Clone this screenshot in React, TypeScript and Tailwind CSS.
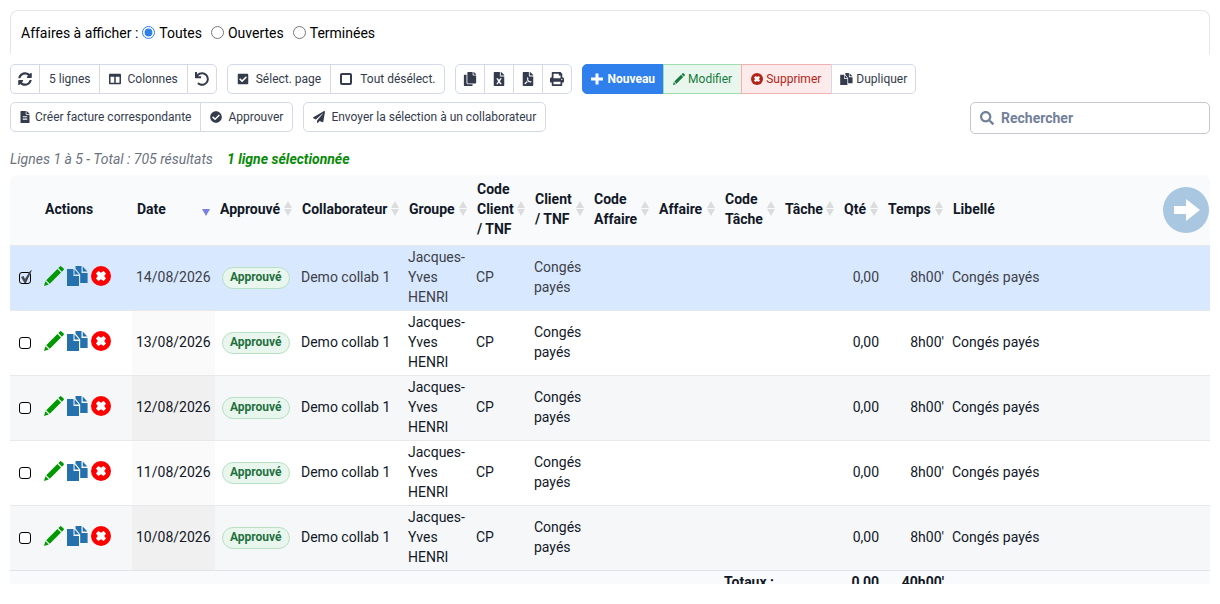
import React from 'react';
import { FaCopy, FaSyncAlt, FaUndo, FaFileExcel, FaFilePdf, FaPrint, FaFileAlt, FaCheckCircle, FaPaperPlane, FaSearch, FaColumns, FaCheckSquare } from 'react-icons/fa';

type IconProps = { className?: string };

const Pencil = ({ className }: IconProps) => (
  <svg viewBox="0 0 20 20" className={className} fill="currentColor" aria-hidden="true">
    <path d="M0 20L1.4 15.2L4.8 18.6Z M2.2 14.2L13.4 3L17 6.6L5.8 17.8Z M14.3 2.1L16 .4Q16.7-.2 17.4.4L19.6 2.6Q20.2 3.3 19.6 4L17.9 5.7Z" />
  </svg>
);

const Duplicate = ({ className }: IconProps) => (
  <svg viewBox="0 0 21 20" className={className} fill="currentColor" aria-hidden="true">
    <path d="M0 3H6.5V10H12V20H0Z M7.5 3.2L12 8.6H7.5Z M8.5 0H14.5V7H20.6V17H13.2V8.6L8.5 2.6Z M15.7 .4L20.4 5.6H15.7Z" />
  </svg>
);

const Remove = ({ className }: IconProps) => (
  <svg viewBox="0 0 20 20" className={className} aria-hidden="true">
    <circle cx="10" cy="10" r="10" fill="currentColor" />
    <path d="M7.4 5L10 6.8L12.6 5L15 7.4L13.2 10L15 12.6L12.6 15L10 13.2L7.4 15L5 12.6L6.8 10L5 7.4Z" fill="#fff" />
  </svg>
);

const Plus = ({ className }: IconProps) => (
  <svg viewBox="0 0 12 12" className={className} fill="currentColor" aria-hidden="true">
    <path d="M4.5 .5H7.5V4.5H12V7.5H7.5V11.5H4.5V7.5H0V4.5H4.5Z" />
  </svg>
);

const Square = ({ className }: IconProps) => (
  <svg viewBox="0 0 12 12" className={className} fill="none" stroke="currentColor" strokeWidth="2" aria-hidden="true">
    <rect x="1" y="1" width="10" height="10" rx="1" />
  </svg>
);

const ArrowRight = ({ className }: IconProps) => (
  <svg viewBox="0 0 46 46" className={className} aria-hidden="true">
    <circle cx="23" cy="23" r="23" fill="#a9c7e0" />
    <path d="M11 19H23V12L37 23L23 34V27H11Z" fill="#fff" />
  </svg>
);

const Sort = () => (
  <svg viewBox="0 0 8 15" className="h-[15px] w-2 shrink-0" fill="#dcdcdc" aria-hidden="true">
    <path d="M4 0L8 7H0Z M0 8H8L4 15Z" />
  </svg>
);

const base = 'flex h-[30px] items-center border text-xs whitespace-nowrap -ml-px first:ml-0 first:rounded-l-[5px] last:rounded-r-[5px]';
const plain = 'border-[#d3d9e8] bg-white text-[#343b4c]';

function Btn({ children, tone = plain, className = 'gap-2 px-[9px]', label }: { children: React.ReactNode; tone?: string; className?: string; label?: string }) {
  return (
    <button type="button" aria-label={label} className={`${base} ${tone} ${className}`}>
      {children}
    </button>
  );
}

const Group = ({ children }: { children: React.ReactNode }) => <div className="flex">{children}</div>;

const columns = [
  { label: 'Approuvé', width: 'w-[82px]' },
  { label: 'Collaborateur', width: 'w-[107px]' },
  { label: 'Groupe', width: 'w-[68px]' },
  { label: 'Code Client / TNF', width: 'w-[58px]' },
  { label: 'Client / TNF', width: 'w-[59px]' },
  { label: 'Code Affaire', width: 'w-[65px]' },
  { label: 'Affaire', width: 'w-[66px]' },
  { label: 'Code Tâche', width: 'w-[60px]' },
  { label: 'Tâche', width: 'w-[59px]' },
  { label: 'Qté', width: 'w-[44px]' },
  { label: 'Temps', width: 'w-[65px]' },
];

const rows = ['14/08/2026', '13/08/2026', '12/08/2026', '11/08/2026', '10/08/2026'];

function Row({ date, index }: { date: string; index: number }) {
  const [checked, setChecked] = React.useState(index === 0);
  const odd = index % 2 === 1;
  const bg = checked ? 'bg-[#d8e8fe] text-[#3c4049]' : odd ? 'bg-white text-[#111827]' : 'bg-[#f6f7f9] text-[#111827]';
  const dateBg = checked ? '' : odd ? 'bg-[#fafafa]' : 'bg-[#f0f0f0]';
  return (
    <tr className={`border-t border-[#e7e8ea] *:pt-px *:pb-[3px] ${bg}`}>
      <td>
        <label className="relative ml-[9px] mt-0.5 block size-3">
          <input
            type="checkbox"
            aria-label={`Sélectionner la ligne du ${date}`}
            checked={checked}
            onChange={(e) => setChecked(e.target.checked)}
            className="block size-3 appearance-none rounded-[3px] border border-black bg-white checked:bg-transparent"
          />
          {checked && (
            <svg viewBox="0 0 12 14" className="pointer-events-none absolute -top-0.5 left-px h-[14px] w-3" fill="#45464e" aria-hidden="true">
              <path d="M1 7L3.5 6L5 9L10 1L12 0L6 13H4.5Z" />
            </svg>
          )}
        </label>
      </td>
      <td className="pl-1">
        <div className="mb-0.5 flex items-center gap-[3px]">
          <button type="button" aria-label="Modifier"><Pencil className="block size-5 text-[#090]" /></button>
          <button type="button" aria-label="Dupliquer"><Duplicate className="block h-5 w-[21px] text-[#2471ad]" /></button>
          <button type="button" aria-label="Supprimer"><Remove className="block size-5 text-[#f00]" /></button>
        </div>
      </td>
      <td className={`pl-1 ${dateBg}`}>{date}</td>
      <td className="pl-[7px]">
        <span className="mt-0.5 inline-block rounded-full border border-[#b8e0c5] bg-[#e9f6ee] px-[7px] pb-0.5 text-xs leading-[18px] font-bold text-[#1f7040]">Approuvé</span>
      </td>
      <td className="pl-1">Demo collab 1</td>
      <td className="pl-1">Jacques-Yves HENRI</td>
      <td className="pl-1">CP</td>
      <td className="pl-1">Congés payés</td>
      <td />
      <td />
      <td />
      <td />
      <td className="pr-1 text-right">0,00</td>
      <td className="pr-1 text-right">8h00'</td>
      <td className="pl-1">Congés payés</td>
    </tr>
  );
}

export default function App() {
  return (
    <main className="flex h-screen flex-col bg-white px-[10px] pt-[10px] pb-5 font-[Roboto,sans-serif] text-sm text-[#111827]">
      <fieldset className="shrink-0 rounded-t-lg border border-b-0 border-[#e5e7eb] px-[10px] pt-3 pb-[11px] text-black">
        <div className="flex items-center leading-5">
          <span className="mr-1">Affaires à afficher :</span>
          {['Toutes', 'Ouvertes', 'Terminées'].map((name) => (
            <label key={name} className="mr-[9px] flex items-center gap-1">
              <input type="radio" name="affaires" defaultChecked={name === 'Toutes'} className="mb-0.5 size-[13px] accent-[#2f80ed]" />
              {name}
            </label>
          ))}
        </div>
      </fieldset>

      <div className="mt-[10px] flex shrink-0 items-end justify-between gap-4">
        <div className="flex flex-col gap-2">
          <div className="flex gap-[10px]">
            <Group>
              <Btn label="Actualiser" className="px-[7px]"><FaSyncAlt className="size-[14px]" /></Btn>
              <Btn>5 lignes</Btn>
              <Btn className="gap-1.5 px-[9px]"><FaColumns className="size-3" />Colonnes</Btn>
              <Btn label="Rétablir" className="px-[7px]"><FaUndo className="size-[14px]" /></Btn>
            </Group>
            <Group>
              <Btn className="gap-[7px] px-[9px]"><FaCheckSquare className="size-3" />Sélect. page</Btn>
              <Btn><Square className="size-3" />Tout désélect.</Btn>
            </Group>
            <Group>
              <Btn label="Copier" className="px-[7px]"><FaCopy className="size-[14px]" /></Btn>
              <Btn label="Exporter vers Excel" className="px-[7px]"><FaFileExcel className="size-[14px]" /></Btn>
              <Btn label="Exporter en PDF" className="px-[7px]"><FaFilePdf className="size-[14px]" /></Btn>
              <Btn label="Imprimer" className="px-[7px]"><FaPrint className="size-[14px]" /></Btn>
            </Group>
            <Group>
              <Btn tone="border-[#2f80ed] bg-[#2f80ed] font-bold text-white" className="gap-1 px-[8px]"><Plus className="size-3" />Nouveau</Btn>
              <Btn tone="border-[#9fdcb2] bg-[#e9f6ee] text-[#157a3c]" className="gap-[3px] px-[9px]"><Pencil className="size-3" />Modifier</Btn>
              <Btn tone="border-[#f3b0b0] bg-[#fdebeb] text-[#b42318]" className="gap-[3px] pr-[10px] pl-[9px]"><Remove className="size-3" />Supprimer</Btn>
              <Btn className="gap-[3px] px-2"><Duplicate className="h-3 w-[13px]" />Dupliquer</Btn>
            </Group>
          </div>
          <div className="flex gap-[10px]">
            <Group>
              <Btn className="gap-1 pr-[9px] pl-2"><FaFileAlt className="size-3" />Créer facture correspondante</Btn>
              <Btn className="gap-1.5 px-[9px]"><FaCheckCircle className="size-3" />Approuver</Btn>
            </Group>
            <Group>
              <Btn className="gap-1.5 px-[9px]"><FaPaperPlane className="size-3" />Envoyer la sélection à un collaborateur</Btn>
            </Group>
          </div>
        </div>
        <label className="-mb-0.5 flex h-8 w-60 items-center gap-[7px] rounded-[5px] border border-[#c5c8d2] bg-white pl-[9px] text-[#72809a]">
          <FaSearch className="size-[14px] shrink-0" />
          <input type="search" aria-label="Rechercher" placeholder="Rechercher" className="w-full min-w-0 bg-transparent font-bold outline-none placeholder:text-[#72809a]" />
        </label>
      </div>

      <p className="mt-[17px] mb-[6px] flex shrink-0 gap-[14px] italic leading-5 text-[#6b7280]">
        <span>Lignes 1 à 5 - Total : 705 résultats</span>
        <strong className="font-bold text-[#088a08]">1 ligne sélectionnée</strong>
      </p>

      <div className="relative min-h-0 flex-1 overflow-hidden rounded-t-md">
        <table className="w-full min-w-[1100px] table-fixed border-collapse leading-5">
          <thead>
            <tr className="h-[70px] bg-[#f9fafc] text-left *:pb-0.5">
              <th aria-label="Sélection" className="w-[30px]" />
              <th className="w-[92px] pl-[5px] font-bold">Actions</th>
              <th className="w-[83px] font-bold">
                <div className="flex items-center justify-between pr-[5px] pl-[5px]">
                  Date
                  <svg viewBox="0 0 8 7" className="mt-2 h-[7px] w-2" fill="#7b7fe0" aria-hidden="true"><path d="M0 0H8L4 7Z" /></svg>
                </div>
              </th>
              {columns.map((c) => (
                <th key={c.label} className={`${c.width} font-bold`}>
                  <div className="flex items-center justify-between px-[5px]">
                    <span>{c.label}</span>
                    <Sort />
                  </div>
                </th>
              ))}
              <th className="pl-[5px] font-bold">Libellé</th>
            </tr>
          </thead>
          <tbody>
            {rows.map((date, i) => <Row key={date} date={date} index={i} />)}
          </tbody>
          <tfoot>
            <tr className="border-t border-[#e0e2e6] bg-[#f9fafc] font-bold *:pt-px *:pb-1">
              <td colSpan={10} />
              <td colSpan={2} className="pl-1">Totaux :</td>
              <td className="pr-1 text-right">0,00</td>
              <td className="pr-1 text-right">40h00'</td>
              <td />
            </tr>
          </tfoot>
        </table>
        <button type="button" aria-label="Défiler vers la droite" className="absolute top-3 right-px">
          <ArrowRight className="block size-[46px]" />
        </button>
      </div>
    </main>
  );
}
